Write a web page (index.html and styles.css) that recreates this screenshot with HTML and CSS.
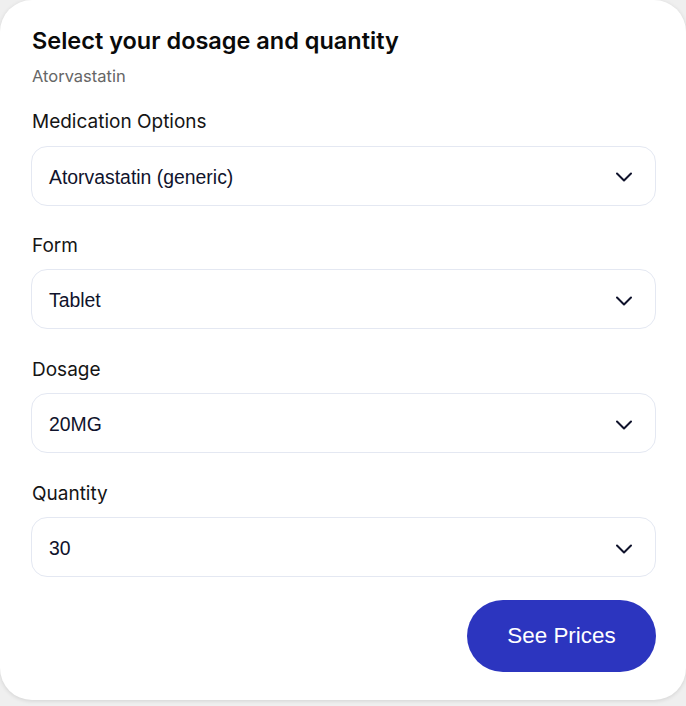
FILE: index.html
```html
<!DOCTYPE html>
<html>
<head>
<meta charset="utf-8">
<link rel="stylesheet" href="styles.css">
</head>
<body>
<div class="card">
  <h1 class="title">Select your dosage and quantity</h1>
  <p class="subtitle">Atorvastatin</p>
  <div class="field">
    <label class="label">Medication Options</label>
    <div class="select"><span>Atorvastatin (generic)</span><svg class="chev" viewBox="0 0 16 10"><path d="M1 1.5 L8 8.5 L15 1.5"/></svg></div>
  </div>
  <div class="field">
    <label class="label">Form</label>
    <div class="select"><span>Tablet</span><svg class="chev" viewBox="0 0 16 10"><path d="M1 1.5 L8 8.5 L15 1.5"/></svg></div>
  </div>
  <div class="field">
    <label class="label">Dosage</label>
    <div class="select"><span>20MG</span><svg class="chev" viewBox="0 0 16 10"><path d="M1 1.5 L8 8.5 L15 1.5"/></svg></div>
  </div>
  <div class="field">
    <label class="label">Quantity</label>
    <div class="select"><span>30</span><svg class="chev" viewBox="0 0 16 10"><path d="M1 1.5 L8 8.5 L15 1.5"/></svg></div>
  </div>
  <div class="actions">
    <button class="btn">See Prices</button>
  </div>
</div>
</body>
</html>
```
FILE: styles.css
```css
html, body {
  margin: 0;
  padding: 0;
  background: #efefef;
}
body {
  width: 686px;
  height: 706px;
  overflow: hidden;
}
.card {
  box-sizing: border-box;
  width: 686px;
  height: 700px;
  background: #fff;
  border-radius: 32px;
  box-shadow: 0 1px 4px rgba(0,0,0,0.12);
  padding: 26px 30px 0 32px;
}
.title {
  margin: 0;
  font-family: Inter, "Liberation Sans", sans-serif;
  font-size: 23.5px;
  font-weight: 600;
  line-height: 30px;
  color: #0a0a0a;
}
.subtitle {
  margin: 10px 0 0;
  font-family: Inter, "Liberation Sans", sans-serif;
  font-size: 16.5px;
  line-height: 20px;
  color: #666;
}
.field {
  margin-top: 24px;
}
.field + .field {
  margin-top: 28.4px;
}
.label {
  display: block;
  font-family: Inter, "Liberation Sans", sans-serif;
  font-size: 19px;
  line-height: 24px;
  color: #151515;
  margin-bottom: 11.5px;
}
.select {
  box-sizing: border-box;
  height: 60px;
  margin-left: -1px;
  border: 1px solid #e4e8f2;
  border-radius: 16px;
  display: flex;
  align-items: center;
  justify-content: space-between;
  padding: 3px 23px 0 17px;
  font-family: "Liberation Sans", Arial, Helvetica, sans-serif;
  font-size: 19.4px;
  color: #10132c;
}
.chev {
  width: 16px;
  height: 10px;
  fill: none;
  stroke: #10132c;
  stroke-width: 2;
  stroke-linecap: round;
  stroke-linejoin: round;
}
.actions {
  display: flex;
  justify-content: flex-end;
  margin-top: 23px;
}
.btn {
  width: 189px;
  height: 72px;
  border: none;
  border-radius: 36px;
  background: #2c35bf;
  color: #fff;
  font-family: "Liberation Sans", Arial, Helvetica, sans-serif;
  font-size: 22.4px;
  font-weight: 400;
  padding: 0;
}
```
